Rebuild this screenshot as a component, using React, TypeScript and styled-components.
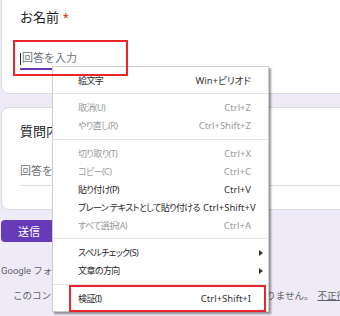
import React from "react";
import styled, { createGlobalStyle } from "styled-components";

const GlobalStyle = createGlobalStyle`
  html, body {
    margin: 0;
    padding: 0;
  }
  body {
    background: #efeaf7;
    overflow: hidden;
    font-family: Roboto, "Noto Sans CJK JP", sans-serif;
  }
  * {
    box-sizing: border-box;
  }
`;

const Page = styled.div`
  position: relative;
  width: 340px;
  height: 316px;
  overflow: hidden;
`;

const Form = styled.div`
  width: 640px;
  margin-left: 1px;
  display: flex;
  flex-direction: column;
`;

const Card = styled.section<{ $first?: boolean }>`
  background: #fff;
  border: 1px solid #dadce0;
  border-radius: 8px;
  margin-top: ${(p) => (p.$first ? "-8px" : "13px")};
  padding: ${(p) => (p.$first ? "16px 18px 23px" : "15px 18px 23px")};
`;

const Title = styled.div`
  font-size: 13px;
  line-height: 18px;
  color: #202124;
`;

const Required = styled.span`
  color: #d93025;
  margin-left: 4px;
`;

const Input = styled.div<{ $focused?: boolean }>`
  display: flex;
  align-items: center;
  margin-top: ${(p) => (p.$focused ? "24px" : "23px")};
  padding-bottom: ${(p) => (p.$focused ? "1px" : "5px")};
  width: ${(p) => (p.$focused ? "180px" : "100%")};
  border-bottom: ${(p) => (p.$focused ? "2px solid #673ab7" : "1px solid #dadce0")};
  font-size: 11px;
  line-height: 16px;
  color: #70757a;
`;

const Caret = styled.span`
  width: 1px;
  height: 12px;
  background: #202124;
  margin-right: 1px;
`;

const SubmitButton = styled.button`
  align-self: flex-start;
  margin-top: 10px;
  width: 56px;
  height: 22px;
  border: none;
  border-radius: 4px;
  background: #673ab7;
  color: #fff;
  font-family: Roboto, "Noto Sans CJK JP", sans-serif;
  font-size: 11px;
  padding: 0;
`;

const Notice = styled.div`
  margin-top: 22px;
  font-size: 9.5px;
  line-height: 13px;
  color: #5f6368;
  white-space: nowrap;
`;

const Footer = styled.div`
  margin-top: 12px;
  padding-left: 12px;
  font-size: 9.5px;
  line-height: 13px;
  color: #5f6368;
  white-space: nowrap;

  a {
    color: #5f6368;
    text-decoration: underline;
    margin-left: 4px;
  }
`;

const Brand = styled.div`
  margin-top: 10px;
  padding-left: 226px;
  font-size: 14px;
  color: #70757a;
  white-space: nowrap;
`;

const Menu = styled.div`
  position: absolute;
  left: 52px;
  top: 66px;
  width: 217px;
  padding: 4px 0;
  background: #fff;
  border: 1px solid #cdcdcd;
  box-shadow: 2px 2px 2px rgba(0, 0, 0, 0.4);
  font-family: "Noto Sans", "Noto Sans CJK JP", sans-serif;
  font-feature-settings: "palt";
`;

const Item = styled.div<{ $disabled?: boolean }>`
  display: flex;
  align-items: center;
  justify-content: space-between;
  gap: 3px;
  height: 18px;
  padding: 0 17px 0 25px;
  color: ${(p) => (p.$disabled ? "#9a9a9a" : "#1f1f1f")};
  white-space: nowrap;
`;

const Label = styled.span`
  font-size: 9px;
  letter-spacing: -0.6px;
`;

const Shortcut = styled.span<{ $disabled?: boolean }>`
  font-size: 9.5px;
  color: ${(p) => (p.$disabled ? "#9a9a9a" : "#333")};
`;

const Arrow = styled.span`
  width: 0;
  height: 0;
  margin-right: -12px;
  border-left: 4px solid #333;
  border-top: 3.5px solid transparent;
  border-bottom: 3.5px solid transparent;
`;

const Separator = styled.div`
  height: 1px;
  background: #e6e6e6;
  margin: 4px 0 4.5px;
`;

const Highlight = styled.div<{ $l: number; $t: number; $w: number; $h: number }>`
  position: absolute;
  left: ${(p) => p.$l}px;
  top: ${(p) => p.$t}px;
  width: ${(p) => p.$w}px;
  height: ${(p) => p.$h}px;
  border: 2px solid #e8262b;
  pointer-events: none;
`;

type Entry =
  | { sep: true }
  | { label: string; shortcut?: string; disabled?: boolean; submenu?: boolean };

const entries: Entry[] = [
  { label: "絵文字", shortcut: "Win+ピリオド" },
  { sep: true },
  { label: "取消(U)", shortcut: "Ctrl+Z", disabled: true },
  { label: "やり直し(R)", shortcut: "Ctrl+Shift+Z", disabled: true },
  { sep: true },
  { label: "切り取り(T)", shortcut: "Ctrl+X", disabled: true },
  { label: "コピー(C)", shortcut: "Ctrl+C", disabled: true },
  { label: "貼り付け(P)", shortcut: "Ctrl+V" },
  { label: "プレーン テキストとして貼り付ける", shortcut: "Ctrl+Shift+V" },
  { label: "すべて選択(A)", shortcut: "Ctrl+A", disabled: true },
  { sep: true },
  { label: "スペルチェック(S)", submenu: true },
  { label: "文章の方向", submenu: true },
  { sep: true },
  { label: "検証(I)", shortcut: "Ctrl+Shift+I" },
];

const ContextMenu = () => (
  <Menu>
    {entries.map((e, i) =>
      "sep" in e ? (
        <Separator key={i} />
      ) : (
        <Item key={i} $disabled={e.disabled}>
          <Label>{e.label}</Label>
          {e.submenu ? <Arrow /> : <Shortcut $disabled={e.disabled}>{e.shortcut}</Shortcut>}
        </Item>
      )
    )}
  </Menu>
);

export default function App() {
  return (
    <Page>
      <GlobalStyle />
      <Form>
        <Card $first>
          <Title>
            お名前<Required>*</Required>
          </Title>
          <Input $focused>
            <Caret />
            回答を入力
          </Input>
        </Card>
        <Card>
          <Title>質問内容</Title>
          <Input>回答を入力</Input>
        </Card>
        <SubmitButton>送信</SubmitButton>
        <Notice>Google フォームでパスワードを送信しないでください。</Notice>
        <Footer>
          このコンテンツは Google が作成または承認したものではありません。
          <a>不正行為の報告</a>
        </Footer>
        <Brand>Google フォーム</Brand>
      </Form>
      <ContextMenu />
      <Highlight $l={13} $t={40} $w={115} $h={36} />
      <Highlight $l={69} $t={285} $w={197} $h={27} />
    </Page>
  );
}
